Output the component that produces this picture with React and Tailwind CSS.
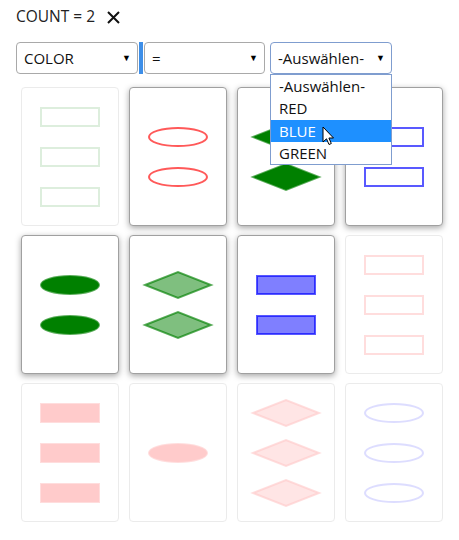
import React from "react";

const COLORS = { red: "#ff0000", green: "#008000", blue: "#0000ff" };

function Shape({ shape, color, shading }) {
  const c = COLORS[color];
  const fill = shading === "open" ? "none" : c;
  const fillOpacity = shading === "half" ? 0.5 : 1;
  const common = { fill, fillOpacity, stroke: c, strokeWidth: 2, strokeOpacity: 0.65 };
  return (
    <svg width="60" height="20" viewBox="0 0 60 20" className="block overflow-visible">
      {shape === "rect" && <rect x="1" y="1" width="58" height="18" {...common} />}
      {shape === "oval" && <ellipse cx="30" cy="10" rx="29" ry="9" {...common} />}
      {shape === "diamond" && <polygon points="-3,10 30,-3 63,10 30,23" {...common} strokeLinejoin="miter" />}
    </svg>
  );
}

function Card({ count, shape, color, shading, active }) {
  return (
    <div
      className={
        "h-[139px] w-[98px] rounded-[4px] bg-white flex flex-col items-center justify-center gap-5 " +
        (active
          ? "border border-[#a0a0a0] shadow-[0_2px_6px_rgba(0,0,0,0.35)]"
          : "border border-[#a0a0a0] opacity-20")
      }
    >
      {Array.from({ length: count }).map((_, i) => (
        <Shape key={i} shape={shape} color={color} shading={shading} />
      ))}
    </div>
  );
}

const cards = [
  { count: 3, shape: "rect", color: "green", shading: "open", active: false },
  { count: 2, shape: "oval", color: "red", shading: "open", active: true },
  { count: 2, shape: "diamond", color: "green", shading: "solid", active: true },
  { count: 2, shape: "rect", color: "blue", shading: "open", active: true },
  { count: 2, shape: "oval", color: "green", shading: "solid", active: true },
  { count: 2, shape: "diamond", color: "green", shading: "half", active: true },
  { count: 2, shape: "rect", color: "blue", shading: "half", active: true },
  { count: 3, shape: "rect", color: "red", shading: "open", active: false },
  { count: 3, shape: "rect", color: "red", shading: "solid", active: false },
  { count: 1, shape: "oval", color: "red", shading: "solid", active: false },
  { count: 3, shape: "diamond", color: "red", shading: "half", active: false },
  { count: 3, shape: "oval", color: "blue", shading: "open", active: false },
];

function Select({ label, width, focused }) {
  return (
    <div
      className={
        "h-8 rounded-[4px] bg-white flex items-center justify-between pl-[7px] pr-[6px] " +
        (focused ? "border border-[#7f9dcf]" : "border border-[#a9a9a9]")
      }
      style={{ width }}
    >
      <span className="text-[15px] text-[#111]">{label}</span>
      <span className="text-[9px] text-black">▼</span>
    </div>
  );
}

export default function App() {
  return (
    <div
      className="w-[459px] h-[540px] bg-white text-[#222] relative"
      style={{ fontFamily: '"Open Sans", "Noto Sans", sans-serif' }}
    >
      <div className="pl-[16px] pt-[4px] flex items-center h-[20px] mt-[5px]">
        <span className="text-[15.5px] leading-none text-[#222]">COUNT = 2</span>
        <svg width="13" height="13" viewBox="0 0 13 13" className="ml-[12px]">
          <path d="M1 1 L12 12 M12 1 L1 12" stroke="#111" strokeWidth="2" />
        </svg>
      </div>
      <div className="flex items-stretch pl-[16px] mt-[17px] h-8">
        <Select label="COLOR" width={122} />
        <div className="w-[4px] bg-[#3d8ee8] ml-[1px] mr-[1px]" />
        <Select label="=" width={121} />
        <div className="w-[5px]" />
        <div className="relative">
          <Select label="-Auswählen-" width={122} focused />
          <div className="absolute left-0 top-8 w-[122px] border border-[#7f9dcf] bg-white z-10 text-[15px] text-[#111]">
            <div className="h-[22px] flex items-center pl-[8px]">-Auswählen-</div>
            <div className="h-[23px] flex items-center pl-[8px]">RED</div>
            <div className="h-[22px] flex items-center pl-[8px] bg-[#1e90ff] text-white">BLUE</div>
            <div className="h-[22px] flex items-center pl-[8px]">GREEN</div>
            <svg
              width="14"
              height="21"
              viewBox="0 0 14 21"
              className="absolute left-[51px] top-[51px]"
            >
              <path
                d="M1 1 L1 16 L4.5 12.8 L7 18.5 L9.3 17.5 L6.9 12 L11.5 12 Z"
                fill="white"
                stroke="black"
                strokeWidth="1"
                strokeLinejoin="round"
              />
            </svg>
          </div>
        </div>
      </div>
      <div className="grid grid-cols-[repeat(4,98px)] gap-x-[10px] gap-y-[9px] pl-[21px] mt-[13px]">
        {cards.map((c, i) => (
          <Card key={i} {...c} />
        ))}
      </div>
    </div>
  );
}
